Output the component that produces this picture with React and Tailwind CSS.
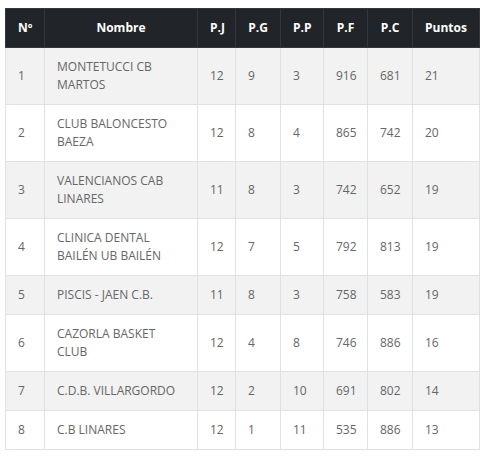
const rows = [
  ["1", "MONTETUCCI CB MARTOS", "12", "9", "3", "916", "681", "21"],
  ["2", "CLUB BALONCESTO BAEZA", "12", "8", "4", "865", "742", "20"],
  ["3", "VALENCIANOS CAB LINARES", "11", "8", "3", "742", "652", "19"],
  ["4", "CLINICA DENTAL BAILÉN UB BAILÉN", "12", "7", "5", "792", "813", "19"],
  ["5", "PISCIS - JAEN C.B.", "11", "8", "3", "758", "583", "19"],
  ["6", "CAZORLA BASKET CLUB", "12", "4", "8", "746", "886", "16"],
  ["7", "C.D.B. VILLARGORDO", "12", "2", "10", "691", "802", "14"],
  ["8", "C.B LINARES", "12", "1", "11", "535", "886", "13"],
];

const headers = [
  { label: "Nº", w: "w-[39px]" },
  { label: "Nombre", w: "w-[153px]" },
  { label: "P.J", w: "w-[38px]" },
  { label: "P.G", w: "w-[45px]" },
  { label: "P.P", w: "w-[43px]" },
  { label: "P.F", w: "w-[44px]" },
  { label: "P.C", w: "w-[45px]" },
  { label: "Puntos", w: "w-[67px]" },
];

export default function App() {
  return (
    <div className="bg-white w-[488px] h-[464px] pt-[8px] pl-[5px] font-['Open_Sans',sans-serif] text-[12px] leading-[18px]">
      <table className="table-fixed border-collapse w-[475px]">
        <thead>
          <tr className="bg-[#212529] text-white">
            {headers.map((h) => (
              <th
                key={h.label}
                className={`${h.w} border border-[#32383e] px-[12px] py-[10px] font-bold text-center align-middle`}
              >
                {h.label}
              </th>
            ))}
          </tr>
        </thead>
        <tbody>
          {rows.map((r, i) => (
            <tr key={r[0]} className={i % 2 === 0 ? "bg-[#f2f2f2]" : "bg-white"}>
              {r.map((c, j) => (
                <td
                  key={j}
                  className="border border-[#dee2e6] px-[12px] py-[10px] text-[#666666] align-middle text-left"
                >
                  {c}
                </td>
              ))}
            </tr>
          ))}
        </tbody>
      </table>
    </div>
  );
}
